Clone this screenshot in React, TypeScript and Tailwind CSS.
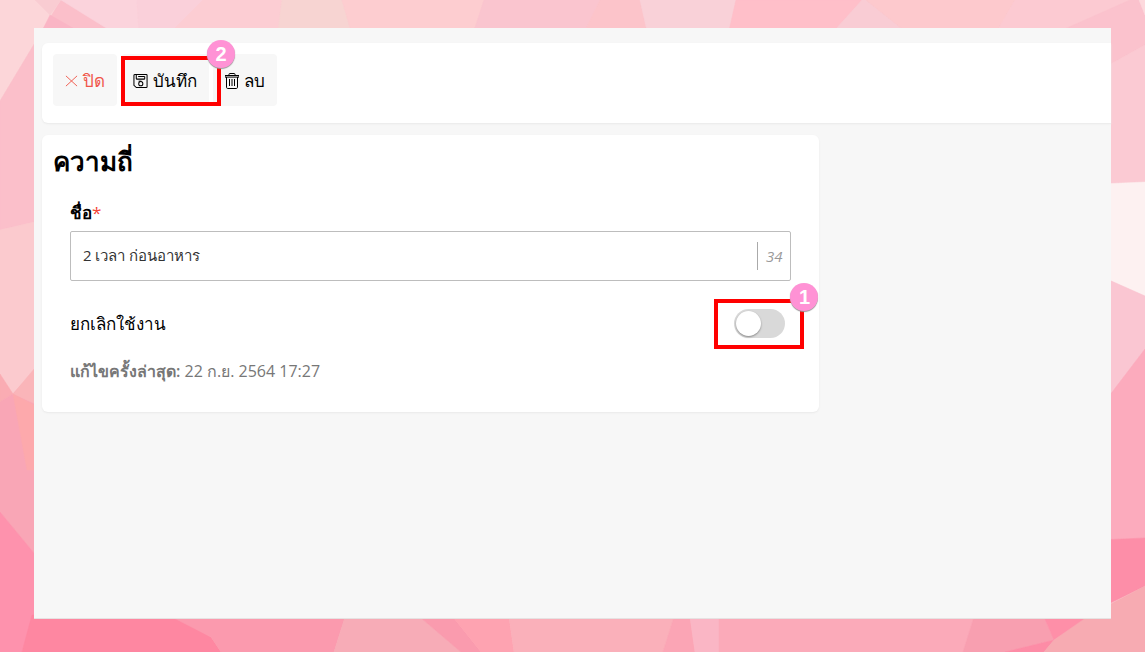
import React, { useState } from 'react';

const shards = [
  { points: '0,0 61,0 0,101', fill: '#fcd6d9' },
  { points: '61,0 42,31 0,101 0,230 60,216 60,28 111,28', fill: '#fbbfca' },
  { points: '50,15 42,31 78,31', fill: '#fab5c5' },
  { points: '61,0 137,0 139,31 111,31', fill: '#fbd3dc' },
  { points: '35,0 61,0 50,15', fill: '#f9ccd2' },
  { points: '137,0 203,0 172,31 139,31', fill: '#fad0da' },
  { points: '203,0 282,0 278,31 172,31', fill: '#fccdd3' },
  { points: '282,0 342,0 351,31 278,31', fill: '#f7d4d2' },
  { points: '342,0 484,0 474,31 351,31', fill: '#fdcdd0' },
  { points: '484,0 640,0 647,31 474,31', fill: '#fac5cf' },
  { points: '600,0 640,0 647,31 585,31', fill: '#fcc4ca' },
  { points: '640,0 736,0 729,31 647,31', fill: '#f9d1d8' },
  { points: '736,0 862,0 834,31 729,31', fill: '#ffbfc9' },
  { points: '862,0 866,0 905,31 834,31', fill: '#f9ccd4' },
  { points: '866,0 1015,0 997,31 905,31', fill: '#fdc9cd' },
  { points: '1015,0 1140,0 1068,31 997,31', fill: '#fccad2' },
  { points: '1130,0 1139,0 1145,15 1145,45 1100,70 1060,31', fill: '#fbc2cd' },
  { points: '1139,0 1145,0 1145,15', fill: '#fdd9dd' },
  { points: '1145,45 1100,70 1100,184 1145,182', fill: '#fbcad3' },
  { points: '1100,184 1145,182 1145,296 1111,281 1100,276', fill: '#fdf1f1' },
  { points: '1100,276 1145,296 1145,349 1111,394 1100,394', fill: '#fac6d2' },
  { points: '1145,349 1100,408 1100,540 1145,538', fill: '#fcabbd' },
  { points: '1100,540 1145,538 1145,586 1100,608', fill: '#fd8ea8' },
  { points: '0,230 60,216 60,340 13,394 0,374', fill: '#fbcace' },
  { points: '0,374 13,394 0,402', fill: '#faacb3' },
  { points: '0,402 13,394 40,365 40,560 0,512', fill: '#f9a6b6' },
  { points: '13,394 40,362 40,406', fill: '#fab5b9' },
  { points: '13,394 40,408 40,470 27,470', fill: '#fda9ac' },
  { points: '0,512 34,553 34,618 22,652 0,652', fill: '#fe92ad' },
  { points: '32,615 172,615 211,637 221,652 22,652', fill: '#fe87a1' },
  { points: '172,617 345,617 334,652 221,652 211,637', fill: '#fb9aae' },
  { points: '345,617 420,617 461,652 334,652', fill: '#f7acb7' },
  { points: '420,617 453,617 481,652 461,652', fill: '#fa9bae' },
  { points: '453,617 509,617 514,652 481,652', fill: '#fea3b1' },
  { points: '509,617 674,617 663,652 514,652', fill: '#fab0ba' },
  { points: '674,617 690,617 695,652 663,652', fill: '#fba5b5' },
  { points: '690,617 719,617 719,652 695,652', fill: '#fab6c5' },
  { points: '719,617 974,617 963,652 719,652', fill: '#fbaab9' },
  { points: '974,617 1044,617 1054,640 1005,652 963,652', fill: '#f89fb0' },
  { points: '1044,617 1090,617 1054,640', fill: '#fe8fa8' },
  { points: '1054,640 1044,652 1005,652', fill: '#fd8ca6' },
  { points: '1054,640 1090,615 1145,586 1145,652 1044,652', fill: '#f7abb2' },
];

const Backdrop: React.FC = () => (
  <svg
    className="absolute inset-0 h-full w-full"
    viewBox="0 0 1145 652"
    preserveAspectRatio="none"
    aria-hidden="true"
  >
    <rect width="1145" height="652" fill="#fbc5cd" />
    {shards.map((shard) => (
      <polygon key={shard.points} points={shard.points} fill={shard.fill} stroke={shard.fill} strokeWidth="0.5" />
    ))}
  </svg>
);

const CloseIcon: React.FC = () => (
  <svg width="13" height="14" viewBox="0 0 14 14" fill="none" stroke="currentColor" strokeWidth="1" aria-hidden="true">
    <path d="M1 1.5l12 11M13 1.5l-12 11" />
  </svg>
);

const SaveIcon: React.FC = () => (
  <svg width="15" height="16" viewBox="0 0 16 16" fill="none" stroke="currentColor" strokeWidth="1.1" aria-hidden="true">
    <path d="M2.2 1h12c.5 0 .8.3.8.8v12.4c0 .5-.3.8-.8.8H3.6L1 12.6V1.8C1 1.3 1.5 1 2.2 1z" />
    <path d="M3.5 1v4.2c0 .5.3.8.8.8h7.4c.5 0 .8-.3.8-.8V3.2" />
    <path d="M5.5 3.2h7" />
    <circle cx="8.3" cy="10.8" r="2.2" />
    <path d="M6 8.2h3" />
  </svg>
);

const TrashIcon: React.FC = () => (
  <svg width="14" height="16" viewBox="0 0 14 16" fill="none" stroke="currentColor" strokeWidth="1" aria-hidden="true">
    <path d="M0 2.5h14v1.6H0zM4 2.5V1.3c0-.5.3-.8.8-.8h4.4c.5 0 .8.3.8.8v1.2" />
    <path d="M1.5 4v10.3c0 .7.5 1.2 1.2 1.2h8.6c.7 0 1.2-.5 1.2-1.2V4" />
    <path d="M4.5 6v7M7 6v7M9.5 6v7" />
  </svg>
);

const StepMarker: React.FC<{ step: number }> = ({ step }) => (
  <span className="absolute -top-5 -right-[18px] flex h-7 w-7 items-center justify-center rounded-full bg-[#ff92d5] font-['Liberation_Sans'] text-[20px] leading-none font-bold text-white shadow-[0_1px_1px_#999]">
    {step}
  </span>
);

const App: React.FC = () => {
  const [name, setName] = useState('2 เวลา ก่อนอาหาร');
  const [disabled, setDisabled] = useState(false);

  return (
    <div className="relative min-h-screen font-['Open_Sans','Noto_Sans',sans-serif] text-black">
      <Backdrop />
      <main className="relative flex min-h-screen flex-col px-[34px] pt-7 pb-[33px]">
        <div className="flex grow flex-col gap-3 border-b border-[#e6e2e2] bg-[#f7f7f7] pt-[15px] pl-2">
          <header className="flex gap-1 rounded-l-md bg-white px-[11px] pt-[11px] pb-[17px] shadow-[0_1px_2px_#e9e9e9]">
            <button type="button" className="flex h-[52px] items-center gap-[5px] rounded-sm bg-[#f7f7f7] px-3 pt-0.5 text-[17px] text-[#f0564a]">
              <CloseIcon />
              ปิด
            </button>
            <div className="relative">
              <button type="button" className="flex h-[52px] items-center gap-[5px] rounded-sm bg-[#f7f7f7] px-3 pt-0.5 text-[17px]">
                <SaveIcon />
                บันทึก
              </button>
              <div className="pointer-events-none absolute top-0.5 -right-3 bottom-0 left-0 z-10 border-4 border-[#ff0000]">
                <StepMarker step={2} />
              </div>
            </div>
            <button type="button" className="flex h-[52px] items-center gap-[5px] rounded-sm bg-[#f7f7f7] px-3 pt-0.5 text-[17px]">
              <TrashIcon />
              ลบ
            </button>
          </header>

          <section className="w-8/11 rounded-md bg-white px-[11px] pt-2 pb-[30px] shadow-[0_1px_2px_#e9e9e9]">
            <h1 className="text-[26px] leading-9 font-bold">ความถี่</h1>

            <div className="px-[17px] pt-5">
              <label htmlFor="name" className="block text-[17px] leading-7 font-semibold">
                ชื่อ<span className="font-normal text-[#f44336]">*</span>
              </label>
              <div className="mt-1 flex h-[50px] items-center rounded-xs border border-[#bdbdbd]">
                <input
                  id="name"
                  value={name}
                  onChange={(e) => setName(e.target.value)}
                  className="h-full min-w-0 grow bg-transparent px-3 text-[15px] text-[#333] outline-none"
                />
                <span className="flex h-7 items-center border-l border-[#aaa] px-2 text-[15px] text-[#999] italic">34</span>
              </div>

              <div className="mt-7 flex h-[29px] items-center justify-between pr-1.5">
                <label htmlFor="disabled" className="text-[17px] leading-7">ยกเลิกใช้งาน</label>
                <div className="relative flex">
                  <input
                    id="disabled"
                    type="checkbox"
                    role="switch"
                    checked={disabled}
                    onChange={(e) => setDisabled(e.target.checked)}
                    className="flex h-[29px] w-[51px] appearance-none items-center rounded-full bg-[#d9d9d9] px-0.5 before:h-[25px] before:w-[25px] before:rounded-full before:bg-white before:shadow-[0_1px_2px_#888] checked:justify-end checked:bg-[#4caf50]"
                  />
                  <div className="pointer-events-none absolute -top-[10px] -right-[19px] -bottom-[11px] -left-5 border-4 border-[#ff0000]">
                    <StepMarker step={1} />
                  </div>
                </div>
              </div>

              <p className="mt-[22px] text-base leading-[22px] text-[#777]">
                <span className="font-semibold">แก้ไขครั้งล่าสุด:</span> 22 ก.ย. 2564 17:27
              </p>
            </div>
          </section>
        </div>
      </main>
    </div>
  );
};

export default App;
